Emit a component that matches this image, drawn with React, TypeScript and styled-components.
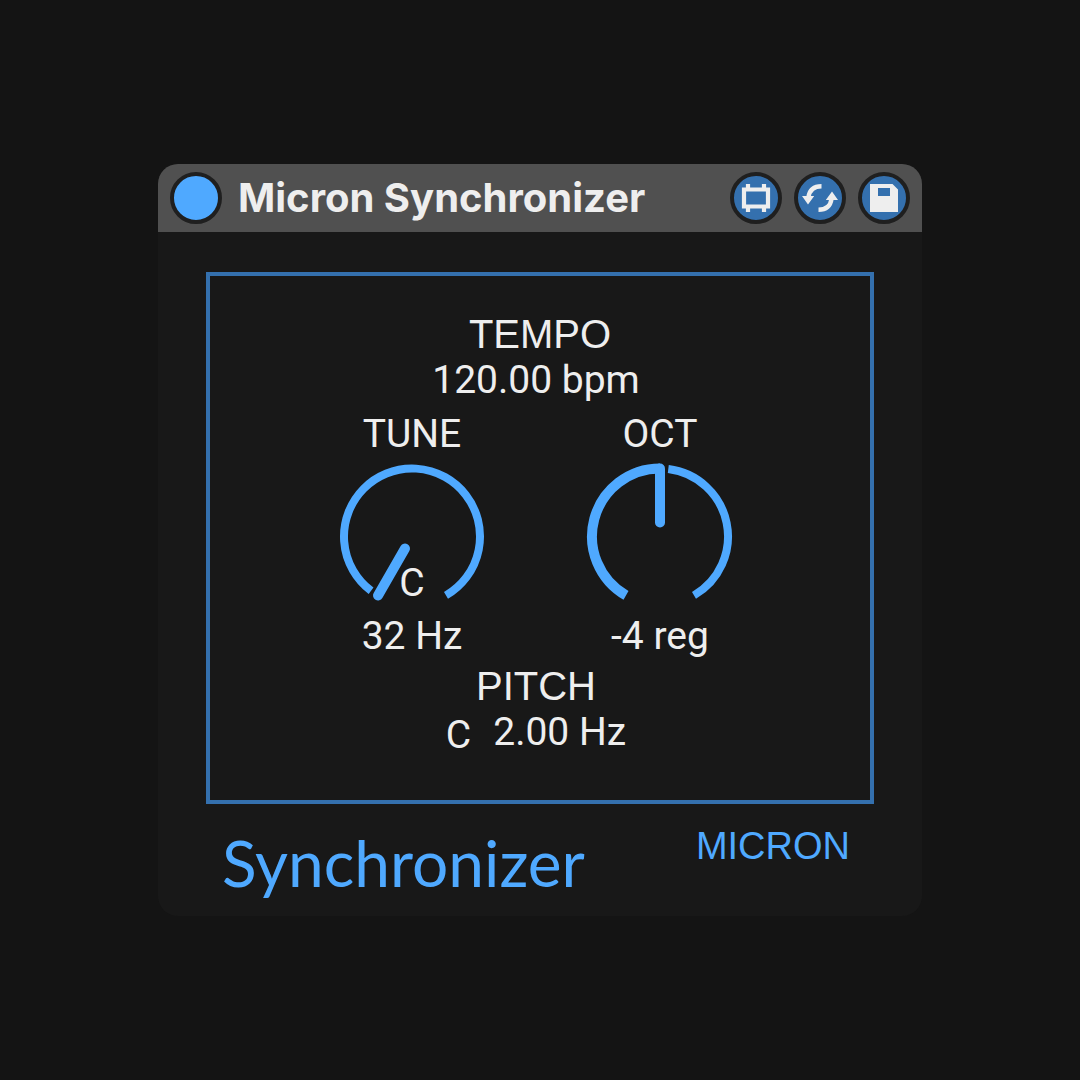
import React, { useState } from "react";
import styled, { createGlobalStyle } from "styled-components";

const color = {
  page: "#141414",
  panel: "#181818",
  header: "#505050",
  ring: "#1f1f1f",
  accent: "#4fa9ff",
  accentDim: "#3470ae",
  text: "#eeeeee",
};

const GlobalStyle = createGlobalStyle`
  *, *::before, *::after { box-sizing: border-box; }
  body { margin: 0; background: ${color.page}; color: ${color.text}; }
`;

const Page = styled.main`
  min-height: 100vh;
  display: grid;
  grid-template-columns: minmax(0, 764px);
  place-content: center;
`;

const Device = styled.section`
  border-radius: 20px;
  overflow: hidden;
  background: ${color.panel};
`;

const Header = styled.header`
  display: flex;
  align-items: center;
  gap: 12px;
  padding: 8px 12px;
  background: ${color.header};
`;

const RoundButton = styled.button<{ $fill: string }>`
  display: grid;
  place-items: center;
  flex: none;
  width: 52px;
  height: 52px;
  padding: 0;
  border: 4px solid ${color.ring};
  border-radius: 50%;
  background: ${(p) => p.$fill};
  color: ${color.text};
  cursor: pointer;
`;

const Title = styled.h1`
  flex: 1;
  margin: 0;
  padding-left: 4px;
  font: 700 40px/52px Inter, sans-serif;
  white-space: nowrap;
`;

const Body = styled.div`
  padding: 40px 48px 14px;
`;

const Screen = styled.div`
  display: flex;
  flex-direction: column;
  padding: 36px 0 38px;
  border: 4px solid ${color.accentDim};
  text-align: center;
`;

const Caption = styled.h2`
  margin: 0;
  font: 400 40px/45px "Liberation Sans", Arial, sans-serif;
`;

const Readouts = styled.div`
  display: flex;
  flex-direction: column;
  padding-right: 8px;
`;

const Value = styled.output`
  display: block;
  font: 400 39px/47px Roboto, sans-serif;
`;

const Knobs = styled.div`
  display: flex;
  justify-content: center;
  gap: 100px;
  padding: 7px 0 4px;
`;

const KnobColumn = styled.div`
  display: flex;
  flex-direction: column;
  width: 148px;
`;

const KnobLabel = styled.label`
  font: 400 39px/47px Roboto, sans-serif;
`;

const Dial = styled.div`
  position: relative;
  height: 155px;

  svg { display: block; }
`;

const DialInput = styled.input`
  position: absolute;
  inset: 0;
  width: 100%;
  height: 100%;
  margin: 0;
  opacity: 0;
  cursor: pointer;
`;

const DialNote = styled.span`
  position: absolute;
  inset: auto 0 6px;
  font: 400 39px/47px Roboto, sans-serif;
`;

const PitchRow = styled.div`
  display: flex;
  justify-content: center;
  gap: 22px;
`;

const Note = styled.span`
  font: 400 39px/53px Roboto, sans-serif;
`;

const Footer = styled.footer`
  display: flex;
  justify-content: space-between;
  padding: 20px 24px 0 16px;
  color: ${color.accent};
`;

const ProductName = styled.p`
  margin: 0;
  font: 400 64px/78px Lato, sans-serif;
`;

const Brand = styled.p`
  margin: 0;
  font: 400 38px/45px "Liberation Sans", Arial, sans-serif;
`;

const FrameIcon = () => (
  <svg width="44" height="44" viewBox="0 0 44 44" aria-hidden="true">
    <path
      d="M10 13.5H34V30.500H10Z M14 8V13 M30 8V13 M14 31V36 M30 31V36"
      fill="none"
      stroke="currentColor"
      strokeWidth="4.2"
    />
  </svg>
);

const SwapIcon = () => (
  <svg width="44" height="44" viewBox="0 0 44 44" aria-hidden="true">
    <path
      d="M23.500 10.200C16 10.200 11.500 14 10.500 21 M20.500 33.800C28 33.800 32.500 30 33.500 23"
      fill="none"
      stroke="currentColor"
      strokeWidth="4.400"
    />
    <path d="M4 20H16.200L10 28.500Z M27.800 24H40L34 15.500Z" fill="currentColor" />
  </svg>
);

const SaveIcon = () => (
  <svg width="44" height="44" viewBox="0 0 44 44" aria-hidden="true">
    <path
      d="M8 8H30.500L36 13.500V36H8Z M16 12V20H28V12Z"
      fill="currentColor"
      fillRule="evenodd"
    />
  </svg>
);

const CX = 74;
const CY = 78.5;
const RADIUS = 68;

// Angles run clockwise from twelve o'clock, in degrees.
const point = (angle: number, r = RADIUS) => {
  const a = (angle * Math.PI) / 180;
  return `${CX + r * Math.sin(a)} ${CY - r * Math.cos(a)}`;
};

const arc = (from: number, to: number) =>
  `M${point(from)}A${RADIUS} ${RADIUS} 0 ${to - from > 180 ? 1 : 0} 1 ${point(to)}`;

interface KnobProps {
  id: string;
  label: string;
  min: number;
  max: number;
  initial: number;
  format: (value: number) => string;
  note?: string;
}

function Knob({ id, label, min, max, initial, format, note }: KnobProps) {
  const [value, setValue] = useState(initial);
  const angle = -150 + (300 * (value - min)) / (max - min);

  return (
    <KnobColumn>
      <KnobLabel htmlFor={id}>{label}</KnobLabel>
      <Dial>
        <svg width="148" height="155" viewBox="0 0 148 155" fill="none" stroke={color.accent} aria-hidden="true">
          {angle < 143 && <path d={arc(angle + 7, 150)} strokeWidth="8" />}
          {angle > -150 && <path d={arc(-150, angle)} strokeWidth="10" />}
          <path d={`M${point(angle)}L${point(angle, 14)}`} strokeWidth="10" strokeLinecap="round" />
        </svg>
        {note && <DialNote>{note}</DialNote>}
        <DialInput
          id={id}
          type="range"
          min={min}
          max={max}
          value={value}
          onChange={(e) => setValue(Number(e.target.value))}
        />
      </Dial>
      <Value htmlFor={id}>{format(value)}</Value>
    </KnobColumn>
  );
}

export default function App() {
  const [active, setActive] = useState(true);

  return (
    <Page>
      <GlobalStyle />
      <Device>
        <Header>
          <RoundButton
            type="button"
            aria-label="Device on"
            aria-pressed={active}
            $fill={active ? color.accent : color.panel}
            onClick={() => setActive(!active)}
          />
          <Title>Micron Synchronizer</Title>
          <RoundButton type="button" aria-label="Show editor" $fill={color.accentDim}>
            <FrameIcon />
          </RoundButton>
          <RoundButton type="button" aria-label="Hot-swap preset" $fill={color.accentDim}>
            <SwapIcon />
          </RoundButton>
          <RoundButton type="button" aria-label="Save preset" $fill={color.accentDim}>
            <SaveIcon />
          </RoundButton>
        </Header>
        <Body>
          <Screen>
            <Caption>TEMPO</Caption>
            <Readouts>
              <Value>120.00 bpm</Value>
              <Knobs>
                <Knob id="tune" label="TUNE" min={32} max={62} initial={32} format={(v) => `${v} Hz`} note="C" />
                <Knob id="oct" label="OCT" min={-8} max={0} initial={-4} format={(v) => `${v} reg`} />
              </Knobs>
              <Caption>PITCH</Caption>
              <PitchRow>
                <Note>C</Note>
                <Value>2.00 Hz</Value>
              </PitchRow>
            </Readouts>
          </Screen>
          <Footer>
            <ProductName>Synchronizer</ProductName>
            <Brand>MICRON</Brand>
          </Footer>
        </Body>
      </Device>
    </Page>
  );
}
